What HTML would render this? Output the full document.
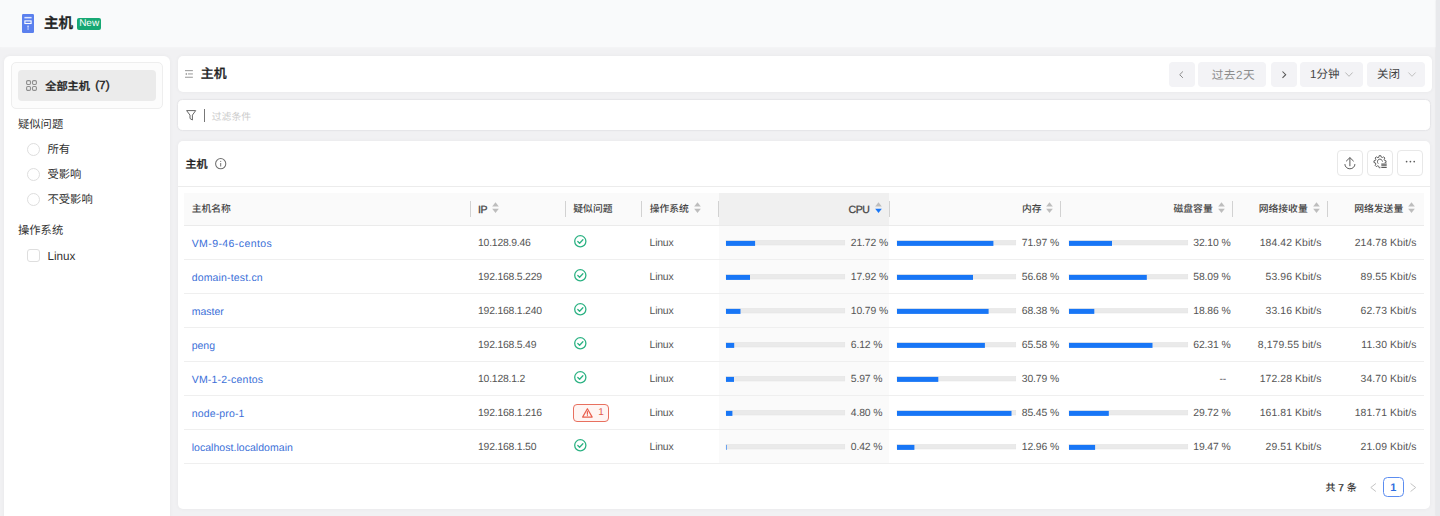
<!DOCTYPE html>
<html lang="zh-CN">
<head>
<meta charset="utf-8">
<title>主机</title>
<style>
*{box-sizing:border-box;margin:0;padding:0}
html,body{width:1440px;height:516px;overflow:hidden}
body{position:relative;background:#f1f1f3;font-family:"Liberation Sans","Noto Sans CJK SC",sans-serif;font-size:10px;color:#333;-webkit-font-smoothing:antialiased;text-rendering:geometricPrecision}
.abs{position:absolute}
.med{font-weight:400;-webkit-text-stroke:.35px currentColor}
svg{display:block;overflow:visible}
.cj{font-family:"Liberation Sans","Noto Sans CJK SC",sans-serif}
.hv .cj{font-weight:500;-webkit-text-stroke:.45px currentColor}
.hv2 .cj{font-weight:500;-webkit-text-stroke:.3px currentColor}
.th .cj,#total .cj{font-weight:500}
/* top band */
#topband{left:0;top:0;width:1440px;height:47px;background:#f9fafb;box-shadow:0 0 3px 1px #f5f6f7}
#rstrip{left:1436px;top:0;width:4px;height:516px;background:#e8e9ec;box-shadow:-1px 0 1.5px rgba(0,0,0,.035);z-index:5}
#pgicon{left:21.8px;top:14.1px;width:12px;height:19px}
#pgtitle{left:44.1px;top:12.6px;height:22px;line-height:22px;font-size:14.5px;font-weight:400;color:#222;letter-spacing:-.2px;white-space:nowrap}
#newbadge{left:77.1px;top:18px;width:24.1px;height:11.5px;border-radius:2px;background:#17a874;color:#fff;font-size:10px;line-height:11.5px;text-align:center}
/* sidebar */
#side{left:4.4px;top:56px;width:165.6px;height:470px;background:#fff;border-radius:6px;box-shadow:0 0 4px rgba(0,0,0,.045)}
#sidebox{left:5.8px;top:6.3px;width:152.4px;height:46.5px;border:1px solid #eeeeee;border-radius:5px;background:#fcfcfc}
#allhosts{left:13px;top:14px;width:138px;height:31px;background:#ebebeb;border-radius:4px}
#allhosts>svg{position:absolute;left:8px;top:10px}
#allhosts>span{position:absolute;left:27.3px;top:1px;line-height:31.8px;font-size:11.15px;font-weight:400;color:#222;white-space:nowrap}
#allhosts b{font-weight:400;font-size:11.8px;margin-left:2.2px;position:relative;top:-.8px;-webkit-text-stroke:.4px #222}
.sgroup{left:13px;margin-top:.7px;font-size:11.3px;color:#333;line-height:16px;height:16px;white-space:nowrap}
.radio{left:22.5px;width:13px;height:13px;border:1px solid #dedede;border-radius:50%;background:#fff}
.chk{left:22.5px;width:13px;height:13px;border:1px solid #dedede;border-radius:3px;background:#fff}
.slabel{left:42.5px;margin-top:.3px;font-size:11.3px;color:#333;line-height:16px;height:16px;white-space:nowrap}
/* main header */
#mhead{left:177.5px;top:56px;width:1254px;height:36px;background:#fff;border-radius:5px;box-shadow:0 0 4px rgba(0,0,0,.045)}
#mhead .ttl{left:23.3px;top:7.6px;line-height:20px;font-size:12.9px;font-weight:400;color:#222;white-space:nowrap}
.tbtn{top:5.8px;height:25.7px;background:#f3f3f6;border-radius:4px;color:#444;font-size:11.5px;line-height:25.7px;white-space:nowrap}
.tbtn>span{position:absolute;top:1px}
/* filter */
#filter{left:177px;top:99px;width:1254px;height:32.4px;background:#fff;border:1px solid #e6e6e9;border-radius:5.5px;box-shadow:0 0 2px rgba(0,0,0,.03)}
#filter .cur{left:26px;top:9px;width:1.2px;height:12.5px;background:#777}
#filter .ph{left:33.8px;top:9.8px;line-height:16px;font-size:9.8px;color:#cbcbcb;white-space:nowrap}
/* table card */
#card{left:178.3px;top:141px;width:1251.7px;height:368.3px;background:#fff;border-radius:5px;box-shadow:0 0 4px rgba(0,0,0,.045)}
#card .ttl{left:7.3px;top:14.7px;line-height:18px;font-size:11px;font-weight:400;color:#222;white-space:nowrap}
.ibtn{top:9.2px;width:25.6px;height:25.6px;border:1px solid #e8e8e8;border-radius:4px;background:#fff}
#divider{left:0;top:45.2px;width:1251.7px;height:1px;background:#ececec}
/* table (coords relative to body) */
#thead{left:184.3px;top:193.4px;width:1239.7px;height:32.6px;background:#fafafa;border-bottom:1px solid #ebebeb}
#cpuhead{left:718.5px;top:193.4px;width:170.7px;height:31.6px;background:#f0f0f0}
#cpubody{left:718.5px;top:226px;width:170.7px;height:238px;background:#fafafa}
.th{top:193.5px;height:31.5px;line-height:32px;font-size:9.8px;font-weight:400;color:#444;white-space:nowrap}
.th.r{text-align:right}
.th.lat{line-height:33px;font-size:10.5px;letter-spacing:-.45px;-webkit-text-stroke:.3px #444}
.sep{top:200.6px;width:1px;height:16.8px;background:#d2d2d2}
.sort{top:202.2px;width:7px;height:11.4px}
.row{left:184.3px;width:1239.7px;height:34px;border-bottom:1px solid #efefef}
.c{position:absolute;top:-.2px;height:34px;line-height:35px;white-space:nowrap;color:#555;font-size:10.4px;letter-spacing:-.2px}
.c.name{left:7.4px;top:1px;color:#3b6fd8;font-size:10.5px}
.c.ip{left:293.7px}
.c.os{left:465.3px}
.c.v{text-align:right}
.c.kb{letter-spacing:.1px}
.c.pc{letter-spacing:-.13px}
.ok{position:absolute;left:389.4px;top:9.4px;width:12.6px;height:12.6px}
.bar{position:absolute;top:14px;height:6px;width:119px}
.warn{position:absolute;left:388.3px;top:7.9px;width:36.2px;height:18.2px;border:1px solid #e8705f;border-radius:4px;background:#fff5f3;color:#e25b4b;font-size:10px;line-height:16.2px}
.warn svg{position:absolute;left:8px;top:3px}
.warn span{position:absolute;left:24.6px;top:0}
/* pagination */
#total{left:1325.5px;top:480.6px;line-height:16px;font-size:10px;font-weight:400;color:#333;white-space:nowrap}
#total b{font-weight:400;-webkit-text-stroke:.3px #333}
#pg1{left:1383px;top:477.1px;width:20.6px;height:19.6px;border:1px solid #5c8df0;border-radius:4.5px;color:#2f6fe0;font-size:11px;font-weight:bold;line-height:20.2px;text-align:center;background:#fff}
</style>
</head>
<body>
<div id="topband" class="abs"></div>
<div id="rstrip" class="abs"></div>

<!-- page title -->
<svg id="pgicon" class="abs" viewBox="0 0 12 19"><rect x="0" y="0" width="12" height="19" rx="1.2" fill="#5b80ee"/><rect x="2.4" y="2.9" width="7.2" height="1.5" fill="#dfe7fd"/><rect x="2.9" y="6.9" width="6.2" height="2.6" fill="none" stroke="#fff" stroke-width="1.1"/><rect x="5.5" y="11.6" width="1.1" height="2" fill="#fff"/><rect x="5.5" y="14.4" width="1.1" height="1.2" fill="#fff"/></svg>
<div id="pgtitle" class="abs hv"><span class="cj">主机</span></div>
<div id="newbadge" class="abs">New</div>

<!-- sidebar -->
<div id="side" class="abs">
 <div class="abs" style="left:.6px;top:0;width:165px;height:460px">
  <div id="sidebox" class="abs"></div>
  <div id="allhosts" class="abs">
    <svg width="11" height="11" viewBox="0 0 11 11" fill="none" stroke="#8e8e8e" stroke-width="1.1"><rect x=".6" y=".6" width="3.9" height="3.9" rx="1.2"/><rect x="6.5" y=".6" width="3.9" height="3.9" rx="1.2"/><rect x=".6" y="6.5" width="3.9" height="3.9" rx="1.2"/><rect x="6.5" y="6.5" width="3.9" height="3.9" rx="1.2"/></svg>
    <span class="mix hv2"><span class="cj">全部主机</span> <b>(7)</b></span>
  </div>
  <div class="abs sgroup" style="top:60px"><span class="cj">疑似问题</span></div>
  <div class="abs radio" style="top:87.2px"></div><div class="abs slabel" style="top:85.7px"><span class="cj">所有</span></div>
  <div class="abs radio" style="top:112.2px"></div><div class="abs slabel" style="top:110.7px"><span class="cj">受影响</span></div>
  <div class="abs radio" style="top:136.8px"></div><div class="abs slabel" style="top:135.3px"><span class="cj">不受影响</span></div>
  <div class="abs sgroup" style="top:166.8px"><span class="cj">操作系统</span></div>
  <div class="abs chk" style="top:193.3px"></div><div class="abs slabel" style="top:192.6px;font-size:11.7px">Linux</div>
 </div>
</div>

<!-- main header -->
<div id="mhead" class="abs">
  <svg class="abs" style="left:7.1px;top:13.6px" width="7.9" height="7.9" viewBox="0 0 8.6 8.6" fill="none" stroke="#8c8c8c" stroke-width="1"><path d="M0 .7H8.6M3.2 4.3H8.6M0 7.9H8.6"/><path d="M2 2.9V5.7L.2 4.3Z" fill="#8c8c8c" stroke="none"/></svg>
  <div class="abs ttl hv2"><span class="cj">主机</span></div>
  <div class="abs tbtn" style="left:991.2px;width:26px"><svg class="abs" style="left:10.6px;top:9.2px" width="4.4" height="7.4" viewBox="0 0 4.4 7.4" fill="none" stroke="#8a8a8a" stroke-width="1"><path d="M3.9 .5L.7 3.7L3.9 6.9"/></svg></div>
  <div class="abs tbtn" style="left:1020.8px;width:68.2px;color:#8c8c8c"><span class="mix" style="left:13.4px;font-size:11.7px;letter-spacing:.45px"><span class="cj">过去</span>2<span class="cj">天</span></span></div>
  <div class="abs tbtn" style="left:1093.3px;width:26px"><svg class="abs" style="left:11px;top:9.2px" width="4.4" height="7.4" viewBox="0 0 4.4 7.4" fill="none" stroke="#555" stroke-width="1.05"><path d="M.5 .5L3.7 3.7L.5 6.9"/></svg></div>
  <div class="abs tbtn" style="left:1122.5px;width:63.3px"><span class="mix" style="left:10px">1<span class="cj">分钟</span></span><svg class="abs" style="left:45px;top:10.3px" width="8" height="5" viewBox="0 0 8 5" fill="none" stroke="#b9b9b9" stroke-width="1"><path d="M.4 .5L4 4.3L7.6 .5"/></svg></div>
  <div class="abs tbtn" style="left:1189.5px;width:58px"><span class="mix" style="left:10px"><span class="cj">关闭</span></span><svg class="abs" style="left:40.5px;top:10.3px" width="8" height="5" viewBox="0 0 8 5" fill="none" stroke="#c2c2c2" stroke-width="1"><path d="M.4 .5L4 4.3L7.6 .5"/></svg></div>
</div>

<!-- filter -->
<div id="filter" class="abs">
  <svg class="abs" style="left:7.9px;top:10.2px" width="10.5" height="11" viewBox="0 0 10.5 11" fill="none" stroke="#666" stroke-width="1" stroke-linejoin="round"><path d="M.6 .6H9.7L6.4 5.1V10L4 8.5V5.1Z"/></svg>
  <div class="abs cur"></div>
  <div class="abs ph"><span class="cj">过滤条件</span></div>
</div>

<!-- table card -->
<div id="card" class="abs">
  <div class="abs ttl hv2"><span class="cj">主机</span></div>
  <svg class="abs" style="left:36.9px;top:16.6px" width="11.4" height="11.4" viewBox="0 0 11.4 11.4" fill="none" stroke="#707070" stroke-width="1.05"><circle cx="5.7" cy="5.7" r="5.1"/><path d="M5.7 5V8.5M5.7 2.9V3.9" stroke-width="1"/></svg>
  <div class="abs ibtn" style="left:1159px"><svg class="abs" style="left:-1px;top:-1px" width="26" height="26" viewBox="0 0 26 26" fill="none" stroke="#5a5a5a" stroke-width="1" stroke-linecap="round" stroke-linejoin="round"><path d="M12.9 15.8V8M9.4 11L12.9 7.6L16.4 11M7.9 14.5A5 4.3 0 0 0 17.9 14.5"/></svg></div>
  <div class="abs ibtn" style="left:1188.7px"><svg class="abs" style="left:-1px;top:-1px" width="26" height="26" viewBox="0 0 26 26" fill="none" stroke="#5a5a5a" stroke-width=".95" stroke-linejoin="round" stroke-linecap="round"><path d="M11.81 7.05L12.14 5.66L13.86 5.66L14.19 7.05L15.44 7.57L16.66 6.82L17.88 8.04L17.13 9.26L17.65 10.51L19.04 10.84L19.04 12.56L17.65 12.89L17.13 14.14L17.88 15.36L16.66 16.58L15.44 15.83L14.19 16.35L13.86 17.74L12.14 17.74L11.81 16.35L10.56 15.83L9.34 16.58L8.12 15.36L8.87 14.14L8.35 12.89L6.96 12.56L6.96 10.84L8.35 10.51L8.87 9.26L8.12 8.04L9.34 6.82L10.56 7.57Z"/><path d="M11 13.4A2.6 2.6 0 1 1 15.5 11.2"/><rect x="13.4" y="13" width="8" height="6.5" fill="#fff" stroke="none"/><path d="M14.3 14.1H19.7M14.3 15.8H19.7M14.3 17.5H19.7" stroke-width="1.1" stroke-linecap="butt"/></svg></div>
  <div class="abs ibtn" style="left:1219px"><svg class="abs" style="left:-1px;top:-1px" width="26" height="26" viewBox="0 0 26 26" fill="#5a5a5a"><circle cx="9.6" cy="11.6" r=".85"/><circle cx="13.4" cy="11.6" r=".85"/><circle cx="17.2" cy="11.6" r=".85"/></svg></div>
  <div id="divider" class="abs"></div>
</div>

<!-- table header -->
<div id="thead" class="abs"></div>
<div id="cpuhead" class="abs"></div>
<div id="cpubody" class="abs"></div>
<div class="abs th" style="left:191.7px"><span class="cj">主机名称</span></div>
<div class="abs sep" style="left:470px"></div>
<div class="abs th lat" style="left:478px">IP</div>
<svg class="abs sort" style="left:491.7px" viewBox="0 0 7 11.4"><path d="M3.5 .3L6.8 4.6H.2Z" fill="#bdbdbd"/><path d="M3.5 11.1L6.8 6.8H.2Z" fill="#bdbdbd"/></svg>
<div class="abs sep" style="left:565px"></div>
<div class="abs th" style="left:573.3px"><span class="cj">疑似问题</span></div>
<div class="abs sep" style="left:641.4px"></div>
<div class="abs th" style="left:649.7px"><span class="cj">操作系统</span></div>
<svg class="abs sort" style="left:693.6px" viewBox="0 0 7 11.4"><path d="M3.5 .3L6.8 4.6H.2Z" fill="#bdbdbd"/><path d="M3.5 11.1L6.8 6.8H.2Z" fill="#bdbdbd"/></svg>
<div class="abs sep" style="left:718px"></div>
<div class="abs th r lat" style="left:749.4px;width:120px">CPU</div>
<svg class="abs sort" style="left:875px" viewBox="0 0 7 11.4"><path d="M3.5 .3L6.8 4.6H.2Z" fill="#bdbdbd"/><path d="M3.5 11.1L6.8 6.8H.2Z" fill="#1876f6"/></svg>
<div class="abs sep" style="left:889px"></div>
<div class="abs th r" style="left:921.5999999999999px;width:120px"><span class="cj">内存</span></div>
<svg class="abs sort" style="left:1046.2px" viewBox="0 0 7 11.4"><path d="M3.5 .3L6.8 4.6H.2Z" fill="#bdbdbd"/><path d="M3.5 11.1L6.8 6.8H.2Z" fill="#bdbdbd"/></svg>
<div class="abs sep" style="left:1060px"></div>
<div class="abs th r" style="left:1092.7px;width:120px"><span class="cj">磁盘容量</span></div>
<svg class="abs sort" style="left:1217.8px" viewBox="0 0 7 11.4"><path d="M3.5 .3L6.8 4.6H.2Z" fill="#bdbdbd"/><path d="M3.5 11.1L6.8 6.8H.2Z" fill="#bdbdbd"/></svg>
<div class="abs sep" style="left:1232px"></div>
<div class="abs th r" style="left:1187.7px;width:120px"><span class="cj">网络接收量</span></div>
<svg class="abs sort" style="left:1313px" viewBox="0 0 7 11.4"><path d="M3.5 .3L6.8 4.6H.2Z" fill="#bdbdbd"/><path d="M3.5 11.1L6.8 6.8H.2Z" fill="#bdbdbd"/></svg>
<div class="abs sep" style="left:1327.3px"></div>
<div class="abs th r" style="left:1283.2px;width:120px"><span class="cj">网络发送量</span></div>
<svg class="abs sort" style="left:1408.2px" viewBox="0 0 7 11.4"><path d="M3.5 .3L6.8 4.6H.2Z" fill="#bdbdbd"/><path d="M3.5 11.1L6.8 6.8H.2Z" fill="#bdbdbd"/></svg>
<div class="abs row" style="top:226.0px">
<div class="c name" style="letter-spacing:0.41px">VM-9-46-centos</div><div class="c ip">10.128.9.46</div>
<svg class="ok" viewBox="0 0 12.6 12.6" fill="none" stroke="#2cb283" stroke-width="1.3" stroke-linecap="round" stroke-linejoin="round"><circle cx="6.3" cy="6.3" r="5.6"/><path d="M3.8 6.5L5.6 8.3L8.9 4.7"/></svg>
<div class="c os">Linux</div>
<svg class="bar" style="left:541.9px" viewBox="0 0 119 6"><rect x="0" y=".4" width="118.8" height="4.6" fill="#eaeaea" stroke="#e2e2e2" stroke-width=".5"/><rect x="0" y=".9" width="29.1" height="5" fill="#1876f6"/></svg><div class="c pc" style="left:666.5px">21.72 %</div>
<svg class="bar" style="left:713.2px" viewBox="0 0 119 6"><rect x="0" y=".4" width="118.8" height="4.6" fill="#eaeaea" stroke="#e2e2e2" stroke-width=".5"/><rect x="0" y=".9" width="96.4" height="5" fill="#1876f6"/></svg><div class="c pc" style="left:837.5px">71.97 %</div>
<svg class="bar" style="left:884.7px" viewBox="0 0 119 6"><rect x="0" y=".4" width="118.8" height="4.6" fill="#eaeaea" stroke="#e2e2e2" stroke-width=".5"/><rect x="0" y=".9" width="43.0" height="5" fill="#1876f6"/></svg><div class="c pc" style="left:1009.0px">32.10 %</div>
<div class="c v kb" style="left:1037.3px;width:100px">184.42 Kbit/s</div>
<div class="c v kb" style="left:1132.3px;width:100px">214.78 Kbit/s</div>
</div>
<div class="abs row" style="top:260.0px">
<div class="c name" style="letter-spacing:0.16px">domain-test.cn</div><div class="c ip">192.168.5.229</div>
<svg class="ok" viewBox="0 0 12.6 12.6" fill="none" stroke="#2cb283" stroke-width="1.3" stroke-linecap="round" stroke-linejoin="round"><circle cx="6.3" cy="6.3" r="5.6"/><path d="M3.8 6.5L5.6 8.3L8.9 4.7"/></svg>
<div class="c os">Linux</div>
<svg class="bar" style="left:541.9px" viewBox="0 0 119 6"><rect x="0" y=".4" width="118.8" height="4.6" fill="#eaeaea" stroke="#e2e2e2" stroke-width=".5"/><rect x="0" y=".9" width="24.0" height="5" fill="#1876f6"/></svg><div class="c pc" style="left:666.5px">17.92 %</div>
<svg class="bar" style="left:713.2px" viewBox="0 0 119 6"><rect x="0" y=".4" width="118.8" height="4.6" fill="#eaeaea" stroke="#e2e2e2" stroke-width=".5"/><rect x="0" y=".9" width="76.0" height="5" fill="#1876f6"/></svg><div class="c pc" style="left:837.5px">56.68 %</div>
<svg class="bar" style="left:884.7px" viewBox="0 0 119 6"><rect x="0" y=".4" width="118.8" height="4.6" fill="#eaeaea" stroke="#e2e2e2" stroke-width=".5"/><rect x="0" y=".9" width="77.8" height="5" fill="#1876f6"/></svg><div class="c pc" style="left:1009.0px">58.09 %</div>
<div class="c v kb" style="left:1037.3px;width:100px">53.96 Kbit/s</div>
<div class="c v kb" style="left:1132.3px;width:100px">89.55 Kbit/s</div>
</div>
<div class="abs row" style="top:294.0px">
<div class="c name" style="letter-spacing:0px">master</div><div class="c ip">192.168.1.240</div>
<svg class="ok" viewBox="0 0 12.6 12.6" fill="none" stroke="#2cb283" stroke-width="1.3" stroke-linecap="round" stroke-linejoin="round"><circle cx="6.3" cy="6.3" r="5.6"/><path d="M3.8 6.5L5.6 8.3L8.9 4.7"/></svg>
<div class="c os">Linux</div>
<svg class="bar" style="left:541.9px" viewBox="0 0 119 6"><rect x="0" y=".4" width="118.8" height="4.6" fill="#eaeaea" stroke="#e2e2e2" stroke-width=".5"/><rect x="0" y=".9" width="14.5" height="5" fill="#1876f6"/></svg><div class="c pc" style="left:666.5px">10.79 %</div>
<svg class="bar" style="left:713.2px" viewBox="0 0 119 6"><rect x="0" y=".4" width="118.8" height="4.6" fill="#eaeaea" stroke="#e2e2e2" stroke-width=".5"/><rect x="0" y=".9" width="91.6" height="5" fill="#1876f6"/></svg><div class="c pc" style="left:837.5px">68.38 %</div>
<svg class="bar" style="left:884.7px" viewBox="0 0 119 6"><rect x="0" y=".4" width="118.8" height="4.6" fill="#eaeaea" stroke="#e2e2e2" stroke-width=".5"/><rect x="0" y=".9" width="25.3" height="5" fill="#1876f6"/></svg><div class="c pc" style="left:1009.0px">18.86 %</div>
<div class="c v kb" style="left:1037.3px;width:100px">33.16 Kbit/s</div>
<div class="c v kb" style="left:1132.3px;width:100px">62.73 Kbit/s</div>
</div>
<div class="abs row" style="top:328.0px">
<div class="c name" style="letter-spacing:0px">peng</div><div class="c ip">192.168.5.49</div>
<svg class="ok" viewBox="0 0 12.6 12.6" fill="none" stroke="#2cb283" stroke-width="1.3" stroke-linecap="round" stroke-linejoin="round"><circle cx="6.3" cy="6.3" r="5.6"/><path d="M3.8 6.5L5.6 8.3L8.9 4.7"/></svg>
<div class="c os">Linux</div>
<svg class="bar" style="left:541.9px" viewBox="0 0 119 6"><rect x="0" y=".4" width="118.8" height="4.6" fill="#eaeaea" stroke="#e2e2e2" stroke-width=".5"/><rect x="0" y=".9" width="8.2" height="5" fill="#1876f6"/></svg><div class="c pc" style="left:666.5px">6.12 %</div>
<svg class="bar" style="left:713.2px" viewBox="0 0 119 6"><rect x="0" y=".4" width="118.8" height="4.6" fill="#eaeaea" stroke="#e2e2e2" stroke-width=".5"/><rect x="0" y=".9" width="87.9" height="5" fill="#1876f6"/></svg><div class="c pc" style="left:837.5px">65.58 %</div>
<svg class="bar" style="left:884.7px" viewBox="0 0 119 6"><rect x="0" y=".4" width="118.8" height="4.6" fill="#eaeaea" stroke="#e2e2e2" stroke-width=".5"/><rect x="0" y=".9" width="83.5" height="5" fill="#1876f6"/></svg><div class="c pc" style="left:1009.0px">62.31 %</div>
<div class="c v kb" style="left:1037.3px;width:100px">8,179.55 bit/s</div>
<div class="c v kb" style="left:1132.3px;width:100px">11.30 Kbit/s</div>
</div>
<div class="abs row" style="top:362.0px">
<div class="c name" style="letter-spacing:0.21px">VM-1-2-centos</div><div class="c ip">10.128.1.2</div>
<svg class="ok" viewBox="0 0 12.6 12.6" fill="none" stroke="#2cb283" stroke-width="1.3" stroke-linecap="round" stroke-linejoin="round"><circle cx="6.3" cy="6.3" r="5.6"/><path d="M3.8 6.5L5.6 8.3L8.9 4.7"/></svg>
<div class="c os">Linux</div>
<svg class="bar" style="left:541.9px" viewBox="0 0 119 6"><rect x="0" y=".4" width="118.8" height="4.6" fill="#eaeaea" stroke="#e2e2e2" stroke-width=".5"/><rect x="0" y=".9" width="8.0" height="5" fill="#1876f6"/></svg><div class="c pc" style="left:666.5px">5.97 %</div>
<svg class="bar" style="left:713.2px" viewBox="0 0 119 6"><rect x="0" y=".4" width="118.8" height="4.6" fill="#eaeaea" stroke="#e2e2e2" stroke-width=".5"/><rect x="0" y=".9" width="41.3" height="5" fill="#1876f6"/></svg><div class="c pc" style="left:837.5px">30.79 %</div>
<div class="c v" style="left:981.7px;width:60px">--</div>
<div class="c v kb" style="left:1037.3px;width:100px">172.28 Kbit/s</div>
<div class="c v kb" style="left:1132.3px;width:100px">34.70 Kbit/s</div>
</div>
<div class="abs row" style="top:396.0px">
<div class="c name" style="letter-spacing:0.155px">node-pro-1</div><div class="c ip">192.168.1.216</div>
<div class="warn"><svg width="10.8" height="9.8" viewBox="0 0 10.8 9.8" fill="none" stroke="#e9604f" stroke-width="1.2" stroke-linejoin="round" stroke-linecap="round"><path d="M5.4 .7L10.2 9.1H.6Z"/><path d="M5.4 3.7V6.2M5.4 7.5V7.6"/></svg><span>1</span></div>
<div class="c os">Linux</div>
<svg class="bar" style="left:541.9px" viewBox="0 0 119 6"><rect x="0" y=".4" width="118.8" height="4.6" fill="#eaeaea" stroke="#e2e2e2" stroke-width=".5"/><rect x="0" y=".9" width="6.4" height="5" fill="#1876f6"/></svg><div class="c pc" style="left:666.5px">4.80 %</div>
<svg class="bar" style="left:713.2px" viewBox="0 0 119 6"><rect x="0" y=".4" width="118.8" height="4.6" fill="#eaeaea" stroke="#e2e2e2" stroke-width=".5"/><rect x="0" y=".9" width="114.5" height="5" fill="#1876f6"/></svg><div class="c pc" style="left:837.5px">85.45 %</div>
<svg class="bar" style="left:884.7px" viewBox="0 0 119 6"><rect x="0" y=".4" width="118.8" height="4.6" fill="#eaeaea" stroke="#e2e2e2" stroke-width=".5"/><rect x="0" y=".9" width="39.8" height="5" fill="#1876f6"/></svg><div class="c pc" style="left:1009.0px">29.72 %</div>
<div class="c v kb" style="left:1037.3px;width:100px">161.81 Kbit/s</div>
<div class="c v kb" style="left:1132.3px;width:100px">181.71 Kbit/s</div>
</div>
<div class="abs row" style="top:430.0px">
<div class="c name" style="letter-spacing:0.04px">localhost.localdomain</div><div class="c ip">192.168.1.50</div>
<svg class="ok" viewBox="0 0 12.6 12.6" fill="none" stroke="#2cb283" stroke-width="1.3" stroke-linecap="round" stroke-linejoin="round"><circle cx="6.3" cy="6.3" r="5.6"/><path d="M3.8 6.5L5.6 8.3L8.9 4.7"/></svg>
<div class="c os">Linux</div>
<svg class="bar" style="left:541.9px" viewBox="0 0 119 6"><rect x="0" y=".4" width="118.8" height="4.6" fill="#eaeaea" stroke="#e2e2e2" stroke-width=".5"/><rect x="0" y=".9" width="0.6" height="5" fill="#1876f6"/></svg><div class="c pc" style="left:666.5px">0.42 %</div>
<svg class="bar" style="left:713.2px" viewBox="0 0 119 6"><rect x="0" y=".4" width="118.8" height="4.6" fill="#eaeaea" stroke="#e2e2e2" stroke-width=".5"/><rect x="0" y=".9" width="17.4" height="5" fill="#1876f6"/></svg><div class="c pc" style="left:837.5px">12.96 %</div>
<svg class="bar" style="left:884.7px" viewBox="0 0 119 6"><rect x="0" y=".4" width="118.8" height="4.6" fill="#eaeaea" stroke="#e2e2e2" stroke-width=".5"/><rect x="0" y=".9" width="26.1" height="5" fill="#1876f6"/></svg><div class="c pc" style="left:1009.0px">19.47 %</div>
<div class="c v kb" style="left:1037.3px;width:100px">29.51 Kbit/s</div>
<div class="c v kb" style="left:1132.3px;width:100px">21.09 Kbit/s</div>
</div>
<div id="total" class="abs mix"><span class="cj">共</span> <b>7</b> <span class="cj">条</span></div>
<svg class="abs" style="left:1369.9px;top:482.6px" width="6.5" height="9" viewBox="0 0 6.5 9" fill="none" stroke="#c4c4c4" stroke-width="1"><path d="M5.9 .5L.8 4.5L5.9 8.5"/></svg>
<div id="pg1" class="abs">1</div>
<svg class="abs" style="left:1410.2px;top:482.6px" width="6.5" height="9" viewBox="0 0 6.5 9" fill="none" stroke="#c4c4c4" stroke-width="1"><path d="M.6 .5L5.7 4.5L.6 8.5"/></svg>
</body>
</html>
